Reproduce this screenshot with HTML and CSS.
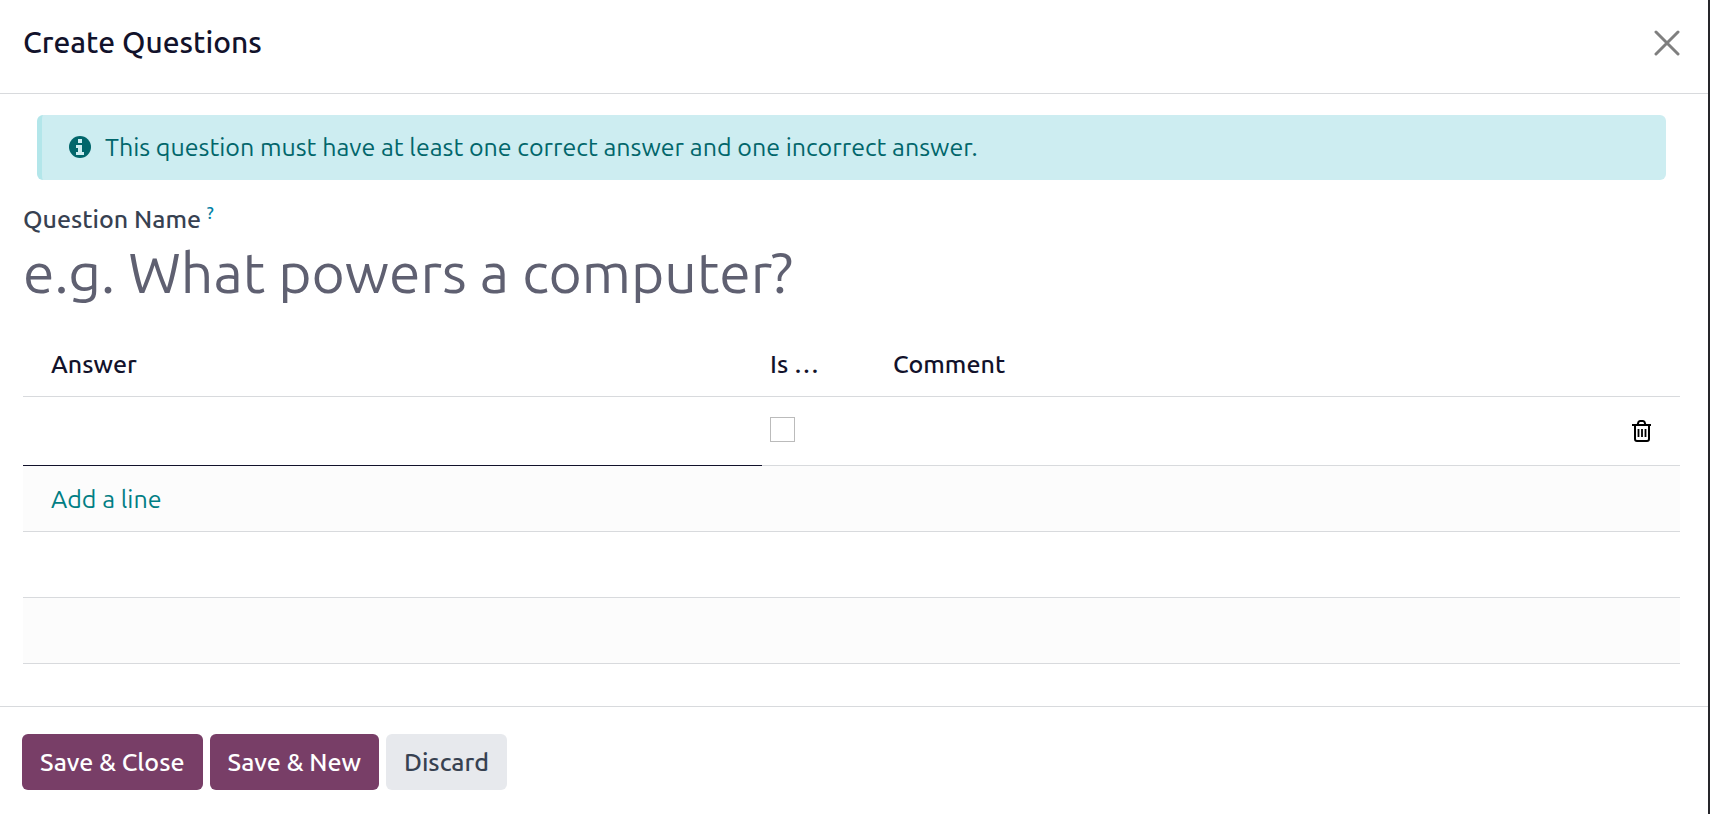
FILE: index.html
```html
<!DOCTYPE html>
<html lang="en">
<head>
    <meta charset="UTF-8">
    <meta name="viewport" content="width=device-width, initial-scale=1.0">
    <title>Create Questions</title>
    <link rel="stylesheet" href="styles.css">
</head>
<body>
    <div class="modal" role="dialog" aria-labelledby="modalTitle">
        <header class="modal-header">
            <h1 class="modal-title" id="modalTitle">Create Questions</h1>
            <button type="button" class="btn-close" aria-label="Close">
                <svg width="26" height="26" viewBox="0 0 26 26">
                    <path d="M2 2L24 24M24 2L2 24" fill="none" stroke="#7f7f7f" stroke-width="3" stroke-linecap="round"/>
                </svg>
            </button>
        </header>

        <main class="modal-body">
            <div class="alert" role="alert">
                <svg class="alert-icon" width="22" height="22" viewBox="0 0 22 22">
                    <circle cx="11" cy="11" r="11" fill="#01666b"/>
                    <path d="M9 3h4v4H9zM7 9h6v7h2v3H7v-3h2v-4H7z" fill="#cdedf1"/>
                </svg>
                <span>This question must have at least one correct answer and one incorrect answer.</span>
            </div>

            <div class="field">
                <label class="field-label" for="questionName">Question Name <sup class="help">?</sup></label>
                <input type="text" class="question-input" id="questionName" placeholder="e.g. What powers a computer?">
            </div>

            <table class="answers">
                <colgroup>
                    <col class="col-answer">
                    <col class="col-correct">
                    <col class="col-comment">
                    <col class="col-delete">
                </colgroup>
                <thead>
                    <tr>
                        <th>Answer</th>
                        <th>Is …</th>
                        <th>Comment</th>
                        <th></th>
                    </tr>
                </thead>
                <tbody>
                    <tr class="row-edit">
                        <td class="cell-active"><input type="text" class="cell-input" aria-label="Answer"></td>
                        <td><input type="checkbox" class="check" aria-label="Is correct"></td>
                        <td><input type="text" class="cell-input" aria-label="Comment"></td>
                        <td>
                            <button type="button" class="btn-delete" aria-label="Delete row">
                                <svg width="19" height="22" viewBox="0 0 19 22" fill="none" stroke="#000" stroke-width="2">
                                    <path d="M0 5H19"/>
                                    <path d="M5.500 5L6.500 2Q7 1 8 1H11Q12 1 12.500 2L13.500 5"/>
                                    <path d="M3 5V19Q3 21 5 21H15Q17 21 17 19V5"/>
                                    <path d="M6.500 9V17M10 9V17M13.500 9V17" stroke-width="1.800"/>
                                </svg>
                            </button>
                        </td>
                    </tr>
                    <tr>
                        <td colspan="4"><a href="#" class="add-line">Add a line</a></td>
                    </tr>
                    <tr><td colspan="4"></td></tr>
                    <tr><td colspan="4"></td></tr>
                </tbody>
            </table>
        </main>

        <footer class="modal-footer">
            <button type="button" class="btn btn-primary">Save &amp; Close</button>
            <button type="button" class="btn btn-primary">Save &amp; New</button>
            <button type="button" class="btn btn-secondary">Discard</button>
        </footer>
    </div>
</body>
</html>
```
FILE: styles.css
```css
* {
    box-sizing: border-box;
}
body {
    margin: 0;
    font-family: Ubuntu, "Noto Sans", sans-serif;
    font-size: 25px;
    line-height: 36px;
    color: #12122b;
    background-color: #fff;
}
button,
input {
    font: inherit;
    color: inherit;
}
.modal {
    display: flex;
    flex-direction: column;
    min-height: 100vh;
    border-right: 2px solid #26262b;
}
.modal-header {
    display: flex;
    align-items: center;
    justify-content: space-between;
    padding: 21px 28px 29px 23px;
    border-bottom: 1px solid #d8dadd;
}
.modal-title {
    margin: 0;
    font-size: 30px;
    line-height: 43px;
    font-weight: 500;
}
.btn-close,
.btn-delete {
    display: flex;
    padding: 0;
    border: none;
    background: none;
    cursor: pointer;
}
.modal-body {
    flex: 1;
    padding: 21px 28px 40px 23px;
}
.alert {
    display: flex;
    align-items: center;
    gap: 14px;
    margin: 0 14px 21px;
    padding: 14px 28px 15px 27px;
    border-left: 5px solid #b3e6ea;
    border-radius: 6px;
    background-color: #cdedf1;
    color: #01666b;
}
.alert-icon {
    flex-shrink: 0;
}
.field {
    margin-bottom: 24px;
}
.field-label {
    display: block;
    font-weight: 500;
    color: #374151;
}
.help {
    font-size: 17px;
    line-height: 0;
    color: #0180a5;
}
.question-input {
    display: block;
    width: 100%;
    height: 70px;
    padding: 0;
    border: none;
    outline: none;
    background: none;
    font-size: 57px;
}
.question-input::placeholder {
    color: #5f6071;
    opacity: 1;
}
.answers {
    width: 100%;
    border-spacing: 0;
    table-layout: fixed;
}
.col-correct {
    width: 123px;
}
.col-delete {
    width: 56px;
}
.answers th,
.answers td {
    height: 66px;
    padding: 0 8px;
    border-bottom: 1px solid #d8dadd;
    text-align: left;
}
.answers th {
    font-weight: 500;
}
.answers th:first-child,
.answers td:first-child {
    padding-left: 28px;
}
.answers tbody tr:nth-child(even) {
    background-color: #fcfcfc;
}
.answers .row-edit td {
    height: 69px;
}
.answers .cell-active {
    border-bottom-color: #12122b;
}
.cell-input {
    display: block;
    width: 100%;
    padding: 0;
    border: none;
    outline: none;
    background: none;
}
.check {
    display: block;
    width: 25px;
    height: 25px;
    margin: 0 0 3px;
    border: 1px solid #bbb;
    background-color: #fff;
    appearance: none;
}
.check:checked {
    background-color: #017e84;
}
.add-line {
    color: #017e84;
    text-decoration: none;
}
.modal-footer {
    display: flex;
    gap: 7px;
    padding: 27px 22px 24px;
    border-top: 1px solid #d8dadd;
}
.btn {
    padding: 10px 18px;
    border: none;
    border-radius: 6px;
    font-weight: 500;
    cursor: pointer;
}
.btn-primary {
    background-color: #783e67;
    color: #fff;
}
.btn-secondary {
    background-color: #e7e9ed;
    color: #374151;
}
```
